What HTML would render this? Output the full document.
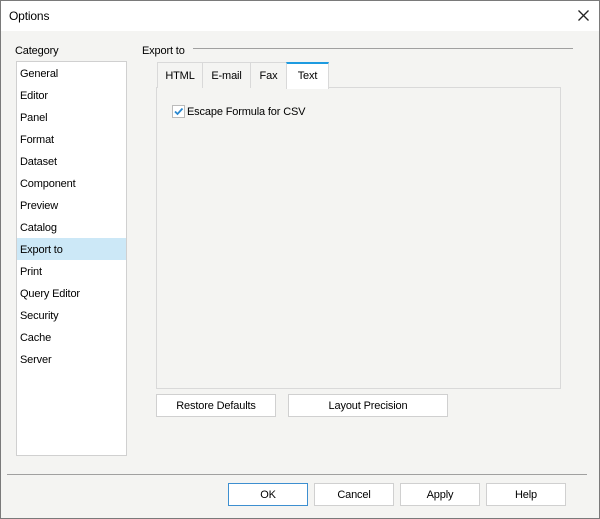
<!DOCTYPE html>
<html><head><style>
*{margin:0;padding:0;box-sizing:border-box}
body{width:600px;height:519px;overflow:hidden;font-family:"Liberation Sans",sans-serif;font-size:11px;letter-spacing:-0.15px;color:#000;background:#f4f4f2;position:relative}
.a{position:absolute;white-space:nowrap}
.list{position:absolute;left:16px;top:61px;width:111px;height:395px;background:#fff;border:1px solid #d0d0d0}
.it{position:absolute;left:0;width:109px;height:22px;line-height:24px;padding-left:3px}
.sel{background:#cce8f7}
.tab{position:absolute;top:62px;height:26px;line-height:27px;text-align:center;border:1px solid #d9d9d9;border-bottom:none;background:#f4f4f2}
.btn{position:absolute;height:23px;line-height:23px;text-align:center;background:#fff;border:1px solid #d0d0d0}
</style></head><body>
<div class="a" style="left:0;top:0;width:600px;height:31px;background:#fff"></div>
<div class="a" style="left:0;top:0;width:600px;height:519px;border:1px solid #7a7a7a"></div>
<div class="a" style="left:9px;top:9px;font-size:12px">Options</div>
<svg class="a" style="left:578px;top:10px" width="11" height="11"><path d="M0.5 0.5L10.5 10.5M10.5 0.5L0.5 10.5" stroke="#222" stroke-width="1.3"/></svg>
<div class="a" style="left:15px;top:45px">Category</div>
<div class="list">
<div class="it" style="top:0">General</div>
<div class="it" style="top:22px">Editor</div>
<div class="it" style="top:44px">Panel</div>
<div class="it" style="top:66px">Format</div>
<div class="it" style="top:88px">Dataset</div>
<div class="it" style="top:110px">Component</div>
<div class="it" style="top:132px">Preview</div>
<div class="it" style="top:154px">Catalog</div>
<div class="it sel" style="top:176px">Export to</div>
<div class="it" style="top:198px">Print</div>
<div class="it" style="top:220px">Query Editor</div>
<div class="it" style="top:242px">Security</div>
<div class="it" style="top:264px">Cache</div>
<div class="it" style="top:286px">Server</div>
</div>
<div class="a" style="left:142px;top:45px">Export to</div>
<div class="a" style="left:193px;top:48px;width:380px;height:1px;background:#a0a0a0"></div>
<div class="a" style="left:156px;top:87px;width:405px;height:302px;border:1px solid #d9d9d9"></div>
<div class="tab" style="left:157px;width:46px">HTML</div>
<div class="tab" style="left:202px;width:49px">E-mail</div>
<div class="tab" style="left:250px;width:37px">Fax</div>
<div class="tab" style="left:286px;width:43px;background:#fff;border-top:2px solid #1e9be0;height:27px;line-height:25px">Text</div>
<div class="a" style="left:172px;top:105px;width:13px;height:13px;border:1px solid #bbb;background:#fff"></div>
<svg class="a" style="left:173px;top:106px" width="11" height="11"><path d="M2 5.5L4.5 8L9.5 2.5" stroke="#2a88d0" stroke-width="1.8" fill="none"/></svg>
<div class="a" style="left:187px;top:106px">Escape Formula for CSV</div>
<div class="btn" style="left:156px;top:394px;width:120px">Restore Defaults</div>
<div class="btn" style="left:288px;top:394px;width:160px">Layout Precision</div>
<div class="a" style="left:7px;top:474px;width:580px;height:1px;background:#a0a0a0"></div>
<div class="btn" style="left:228px;top:483px;width:80px;border-color:#3d8fd0">OK</div>
<div class="btn" style="left:314px;top:483px;width:80px">Cancel</div>
<div class="btn" style="left:400px;top:483px;width:80px">Apply</div>
<div class="btn" style="left:486px;top:483px;width:80px">Help</div>
</body></html>
